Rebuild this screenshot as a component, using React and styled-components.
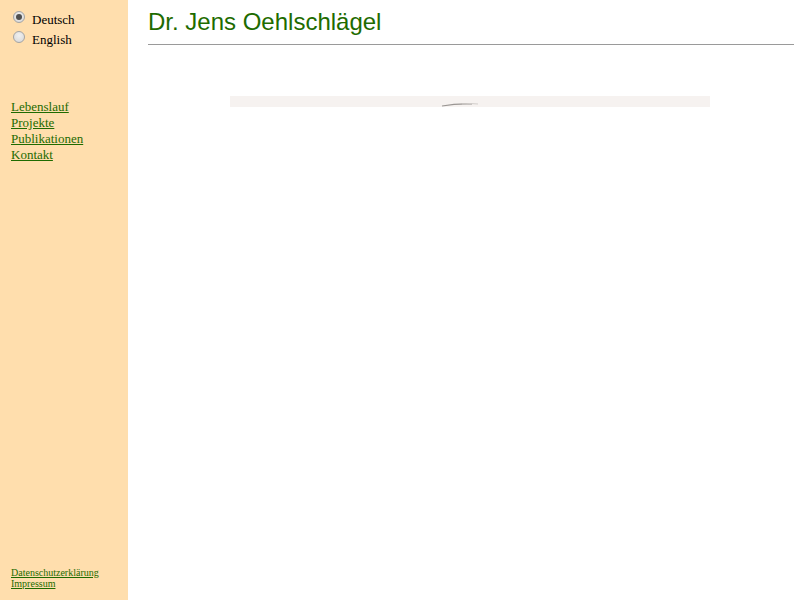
import React, { useState } from "react";
import styled, { createGlobalStyle } from "styled-components";

const GlobalStyle = createGlobalStyle`
  html, body {
    margin: 0;
    padding: 0;
    height: 100%;
    background: #ffffff;
  }
  #root {
    height: 100%;
  }
`;

const App = () => {
  const [lang, setLang] = useState("de");

  return (
    <Page>
      <GlobalStyle />
      <Sidebar>
        <LangForm>
          <LangRow>
            <Radio
              type="radio"
              name="lang"
              checked={lang === "de"}
              onChange={() => setLang("de")}
            />
            <LangLabel>Deutsch</LangLabel>
          </LangRow>
          <LangRow>
            <Radio
              type="radio"
              name="lang"
              checked={lang === "en"}
              onChange={() => setLang("en")}
            />
            <LangLabel>English</LangLabel>
          </LangRow>
        </LangForm>

        <Nav>
          <NavLink href="#">Lebenslauf</NavLink>
          <NavLink href="#">Projekte</NavLink>
          <NavLink href="#">Publikationen</NavLink>
          <NavLink href="#">Kontakt</NavLink>
        </Nav>

        <Footer>
          <FooterLink href="#">Datenschutzerklärung</FooterLink>
          <FooterLink href="#">Impressum</FooterLink>
        </Footer>
      </Sidebar>

      <Main>
        <Title>Dr. Jens Oehlschlägel</Title>
        <Rule />
        <Photo>
          <svg width="480" height="11" viewBox="0 0 480 11">
            <path
              d="M212 10 Q226 7.5 242 8"
              stroke="#9a9693"
              strokeWidth="1.2"
              fill="none"
            />
            <path
              d="M232 8 Q240 7 248 8"
              stroke="#d2cecb"
              strokeWidth="1"
              fill="none"
            />
          </svg>
        </Photo>
      </Main>
    </Page>
  );
};

export default App;

const Page = styled.div`
  display: flex;
  height: 100%;
  min-height: 600px;
`;

const Sidebar = styled.div`
  width: 128px;
  flex-shrink: 0;
  background: #ffdead;
  display: flex;
  flex-direction: column;
  box-sizing: border-box;
  padding: 8px 0 11px 0;
  font-family: "Liberation Serif", "Times New Roman", serif;
`;

const LangForm = styled.div`
  display: flex;
  flex-direction: column;
  padding-left: 13px;
`;

const LangRow = styled.label`
  display: flex;
  align-items: flex-start;
  height: 20px;
  font-size: 13px;
  color: #000;
  cursor: pointer;
`;

const Radio = styled.input`
  appearance: none;
  -webkit-appearance: none;
  box-sizing: border-box;
  width: 12px;
  height: 12px;
  margin: 3px 7px 0 0;
  border-radius: 50%;
  border: 1px solid #a4a4a4;
  background: radial-gradient(circle at 50% 35%, #f0f0f0 0%, #d6d6d6 100%);
  display: flex;
  align-items: center;
  justify-content: center;

  &:checked::after {
    content: "";
    width: 6px;
    height: 6px;
    border-radius: 50%;
    background: #505050;
  }
`;

const LangLabel = styled.span`
  line-height: 24px;
`;

const Nav = styled.nav`
  display: flex;
  flex-direction: column;
  margin-top: 51px;
  padding-left: 11px;
`;

const NavLink = styled.a`
  font-size: 13px;
  line-height: 16px;
  color: #1e6b00;
  text-decoration: underline;
  align-self: flex-start;
`;

const Footer = styled.div`
  margin-top: auto;
  display: flex;
  flex-direction: column;
  padding-left: 11px;
`;

const FooterLink = styled.a`
  font-size: 10px;
  line-height: 11px;
  color: #1e6b00;
  text-decoration: underline;
  align-self: flex-start;
`;

const Main = styled.div`
  flex: 1;
  display: flex;
  flex-direction: column;
  padding: 0 6px 0 20px;
`;

const Title = styled.h1`
  margin: 8px 0 0 0;
  font-family: "Liberation Sans", Arial, sans-serif;
  font-weight: normal;
  font-size: 24px;
  line-height: 28px;
  color: #1e6b00;
`;

const Rule = styled.div`
  height: 1px;
  background: #9a9a9a;
  margin-top: 8px;
`;

const Photo = styled.div`
  width: 480px;
  height: 11px;
  margin: 51px 0 0 82px;
  background: #f6f2f0;
  display: flex;
`;
